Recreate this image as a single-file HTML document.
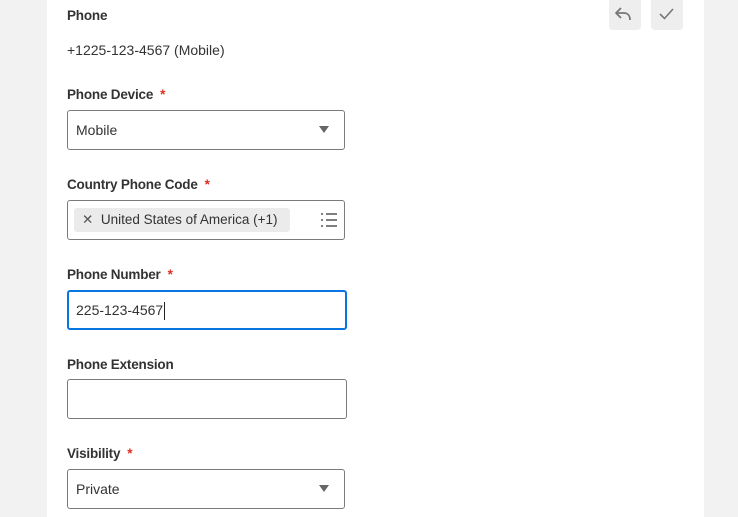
<!DOCTYPE html>
<html><head><style>
*{margin:0;padding:0;box-sizing:border-box}
body{width:738px;height:517px;background:#f2f2f2;font-family:"Liberation Sans",Arial,sans-serif;position:relative;overflow:hidden;color:#333}
.card{position:absolute;left:47px;top:0;width:657px;height:517px;background:#fff}
.a{position:absolute}
.lbl{font-size:13.5px;font-weight:bold;color:#333;letter-spacing:-0.2px}
.lbl .s{color:#de2e21;margin-left:7px;font-weight:bold}
.box{position:absolute;left:67px;width:278px;height:40px;border:1px solid #7b7b7b;border-radius:3px;background:#fff;font-size:14px;color:#333;padding-left:8px;line-height:38px}
.tri{position:absolute;right:15px;top:15px;width:0;height:0;border-left:5px solid transparent;border-right:5px solid transparent;border-top:7px solid #666}
.btn{position:absolute;top:0;width:32px;height:30px;background:#eeeeee;border-radius:0 0 4px 4px}
</style></head><body>
<div class="card"></div>
<div class="btn" style="left:609px"><svg width="32" height="30"><path d="M12 8 L7 13 L12 18 M7 13 H15 C19 13 21 16 21 20" fill="none" stroke="#777" stroke-width="1.8" stroke-linejoin="round"/></svg></div>
<div class="btn" style="left:651px"><svg width="32" height="30"><path d="M9 14 L13.5 18.5 L22 9" fill="none" stroke="#777" stroke-width="1.6"/></svg></div>
<div class="a lbl" style="left:67px;top:8px">Phone</div>
<div class="a" style="left:67px;top:42px;font-size:14px">+1225-123-4567 (Mobile)</div>

<div class="a lbl" style="left:67px;top:87px">Phone Device<span class="s">*</span></div>
<div class="box" style="top:110px">Mobile<div class="tri"></div></div>

<div class="a lbl" style="left:67px;top:177px">Country Phone Code<span class="s">*</span></div>
<div class="box" style="top:200px;padding-left:6px">
<div style="position:absolute;left:6px;top:7px;height:24px;width:216px;background:#ebebeb;border-radius:3px;line-height:24px;font-size:13.5px;padding-left:8px"><span style="color:#555">✕</span>&nbsp; United States of America (+1)</div>
<svg class="a" style="right:6px;top:11px" width="18" height="16"><g stroke="#555" stroke-width="1.5"><path d="M1 2h2M6 2h11M1 8h2M6 8h11M1 14h2M6 14h11"/></g></svg>
</div>

<div class="a lbl" style="left:67px;top:267px">Phone Number<span class="s">*</span></div>
<div class="box" style="top:290px;width:280px;border:2px solid #0875e1;line-height:36px;padding-left:7px">225-123-4567<span style="border-left:1px solid #222;margin-left:1px;height:18px;display:inline-block;vertical-align:middle"></span></div>

<div class="a lbl" style="left:67px;top:357px">Phone Extension</div>
<div class="box" style="top:379px;width:280px"></div>

<div class="a lbl" style="left:67px;top:446px">Visibility<span class="s">*</span></div>
<div class="box" style="top:469px">Private<div class="tri"></div></div>
</body></html>
